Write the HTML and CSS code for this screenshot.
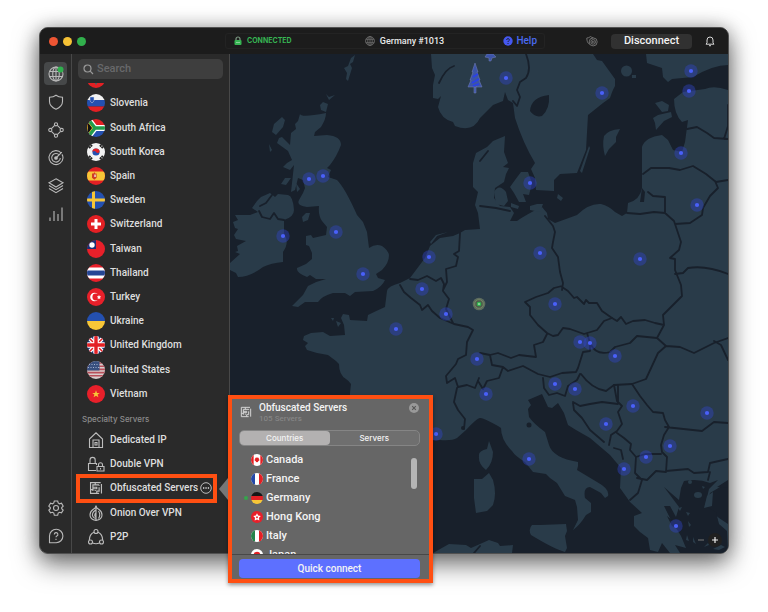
FILE: index.html
```html
<!DOCTYPE html>
<html lang="en">
<head>
<meta charset="utf-8">
<title>VPN</title>
<link rel="stylesheet" href="styles.css">
</head>
<body>
<main class="window">
  <header class="titlebar">
    <div class="lights"><i class="light red"></i><i class="light yellow"></i><i class="light green"></i></div>
    <div class="status">
      <span class="connected"><svg width="8" height="10" viewBox="0 0 8 10"><path d="M2 4.500V3a2 2 0 0 1 4 0v1.500" fill="none" stroke="#7d9a83" stroke-width="1.200"/><rect x=".5" y="4" width="7" height="5" rx="1" fill="#37b453"/><path d="M2.500 6.500h3" stroke="#d6f0dc" stroke-dasharray="1 1"/></svg>CONNECTED</span>
      <span class="server"><svg width="10" height="10" viewBox="0 0 18 18" fill="none" stroke="#6c6c6c" stroke-width="1.500"><circle cx="9" cy="9" r="8"/><ellipse cx="9" cy="9" rx="4" ry="8"/><path d="M1.500 6h15M1.500 12h15M9 1v16"/></svg>Germany #1013</span>
      <a class="help" href="#help"><svg width="10" height="10" viewBox="0 0 10 10"><circle cx="5" cy="5" r="4.700" fill="#4558f0"/><path d="M3.700 3.900a1.300 1.300 0 1 1 1.800 1.200Q5 5.400 5 6M5 7v1" fill="none" stroke="#1c2030"/></svg>Help</a>
    </div>
    <div class="actions">
      <button class="icon-btn" aria-label="Pause protection"><svg width="12" height="12" viewBox="0 0 12 12" fill="none" stroke="#777" stroke-width=".9"><path d="M3.500 9.300C1.600 8 .8 6 .8 3Q3 3 4.500 1.500 5.800 2.600 7.200 2.800"/><circle cx="7.200" cy="6.900" r="4"/><circle cx="7.200" cy="6.900" r="2.300"/><path d="M6.600 5.900v2M7.900 5.900v2"/></svg></button>
      <button class="disconnect">Disconnect</button>
      <button class="icon-btn" aria-label="Notifications"><svg width="10" height="11" viewBox="0 0 10 11" fill="none" stroke="#d8d8d8"><path d="M1 8.200h8L8 6.800V4a3 3 0 0 0-6 0v2.800zM4 9.700h2"/></svg></button>
    </div>
  </header>

  <div class="body">
    <nav class="rail" aria-label="Sections">
      <button class="active" aria-label="Countries"><svg viewBox="0 0 18 18"><circle cx="9" cy="9" r="7"/><ellipse cx="9" cy="9" rx="3.300" ry="7"/><path d="M2.700 6.500h12.600M2.700 11.500h12.600M9 2v14"/><circle cx="13.500" cy="4.500" r="3" fill="#2fb04d" stroke="none"/></svg></button>
      <button aria-label="Threat protection"><svg viewBox="0 0 18 18"><path d="M9 2.200Q11.500 4.200 15.500 4.200V8.500Q15.500 13.500 9 16.200 2.500 13.500 2.500 8.500V4.200Q6.500 4.200 9 2.200z"/></svg></button>
      <button aria-label="Meshnet"><svg viewBox="0 0 18 18"><circle cx="9" cy="3.300" r="1.600"/><circle cx="3.300" cy="9" r="1.600"/><circle cx="14.700" cy="9" r="1.600"/><circle cx="9" cy="14.700" r="1.600"/><path d="M7.700 4.300 4.400 7.700M10.300 4.300l3.300 3.400M4.400 10.300l3.300 3.300M13.600 10.300l-3.300 3.300"/></svg></button>
      <button aria-label="Dark web monitor"><svg viewBox="0 0 18 18"><path d="M14.300 4A7 7 0 1 0 16 9q0-2-1-3.600M12.300 6A4.300 4.300 0 1 0 13.300 9M9 9l5.800-5.800"/><circle cx="9" cy="9" r="1.300" fill="#c4c4c4"/></svg></button>
      <button aria-label="Split tunneling"><svg viewBox="0 0 18 18"><path d="M9 1.800l7 4-7 4.200-7-4.200zM2 8.500l7 4.200 7-4.200M2 11.500l7 4.200 7-4.200"/></svg></button>
      <button aria-label="Statistics"><svg viewBox="0 0 18 18"><path d="M3 12.500V16M7 6v10M11 9v7M15 2.500V16"/></svg></button>
      <span class="push"></span>
      <button aria-label="Settings"><svg viewBox="0 0 18 18"><circle cx="9" cy="9" r="2.500"/><path d="M7.300 2h3.400l.5 2 1.300.8 2-.6 1.700 2.900-1.500 1.400v1.200l1.500 1.300-1.700 2.900-2-.6-1.300.8-.5 2.100H7.300l-.5-2.100-1.300-.8-2 .6L1.800 11l1.500-1.300V8.500L1.800 7.100l1.700-2.900 2 .6L6.800 4z"/></svg></button>
      <button aria-label="Support"><svg viewBox="0 0 18 18"><path d="M2.500 15.700V9A6.700 6.700 0 1 1 9.200 15.700z"/><path d="M7.300 7.500a1.800 1.800 0 1 1 2.500 1.600Q9 9.500 9 10.300M9 11.700v1.200"/></svg></button>
    </nav>

    <aside class="sidebar">
      <label class="search"><svg width="11" height="11" viewBox="0 0 11 11" fill="none" stroke="#9a9a9a" stroke-width="1.200"><circle cx="4.500" cy="4.500" r="3.500"/><path d="M7.200 7.200 10 10"/></svg><input type="search" placeholder="Search" aria-label="Search"></label>
      <div class="scroll">
        <div class="countries">
          <button class="row" aria-label="Slovakia"><svg class="flag" viewBox="0 0 18 18"><path fill="#eee" d="M0 0h18v9H0z"/><path fill="#e32024" d="M0 9h18v9H0z"/><path fill="#466" d="M6 10h6l-3 5z"/></svg></button>
          <button class="row"><svg class="flag" viewBox="0 0 18 18"><path fill="#f3f3f3" d="M0 0h18v6H0z"/><path fill="#2450b0" d="M0 6h18v6.500H0z"/><path fill="#e32024" d="M0 12.500h18V18H0z"/><path fill="#2450b0" stroke="#cfd6e6" stroke-width=".5" d="M3 3h4v3.500q-.5 1.500-2 2.500-1.500-1-2-2.500z"/></svg>Slovenia</button>
          <button class="row"><svg class="flag" viewBox="0 0 18 18"><path fill="#e32024" d="M0 0h18v9H0z"/><path fill="#2450b0" d="M0 9h18v9H0z"/><path d="M1 0 8 9 1 18M8 9h10" fill="none" stroke="#fff" stroke-width="6"/><path d="M0 1v16l6-8z" fill="#111" stroke="#f5c12e" stroke-width="1.500"/><path d="M1 0 8 9 1 18M8 9h10" fill="none" stroke="#239b4b" stroke-width="3.400"/></svg>South Africa</button>
          <button class="row"><svg class="flag" viewBox="0 0 18 18"><path fill="#f3f3f3" d="M0 0h18v18H0z"/><circle cx="9" cy="9" r="3.600" fill="#2450b0"/><path d="M5.400 9a3.600 3.600 0 0 1 7.200 0q-2 2-3.600 0T5.400 9z" fill="#e32024"/><path d="m2 5 3-3M13 2l3 3M2 13l3 3M13 16l3-3" stroke="#222" stroke-width="2.200" stroke-dasharray="2 .4"/></svg>South Korea</button>
          <button class="row"><svg class="flag" viewBox="0 0 18 18"><path fill="#e32024" d="M0 0h18v18H0z"/><path fill="#f7c637" d="M0 4.500h18v9H0z"/><path fill="#cf3b26" d="M5 6.500h1.500L7.300 5l.8 1.500h1.500v4.300l-2.300 2-2.300-2z"/><path fill="#f3d9d0" d="M7.300 7.500h1.500v2.500H7.300z"/></svg>Spain</button>
          <button class="row"><svg class="flag" viewBox="0 0 18 18"><path fill="#2450b0" d="M0 0h18v18H0z"/><path fill="#f7c637" d="M5 0h3v18H5zM0 7.500h18v3H0z"/></svg>Sweden</button>
          <button class="row"><svg class="flag" viewBox="0 0 18 18"><path fill="#e32024" d="M0 0h18v18H0z"/><path fill="#fff" d="M7.500 4h3v3.500H14v3h-3.500V14h-3v-3.500H4v-3h3.500z"/></svg>Switzerland</button>
          <button class="row"><svg class="flag" viewBox="0 0 18 18"><path fill="#e8202a" d="M0 0h18v18H0z"/><path fill="#1b2e74" d="M0 0h9v9H0z"/><circle cx="5" cy="5" r="2.700" fill="#fff"/></svg>Taiwan</button>
          <button class="row"><svg class="flag" viewBox="0 0 18 18"><path fill="#e8202a" d="M0 0h18v18H0z"/><path fill="#fff" d="M0 3.500h18v11H0z"/><path fill="#254595" d="M0 6.500h18v5H0z"/></svg>Thailand</button>
          <button class="row"><svg class="flag" viewBox="0 0 18 18"><path fill="#e8202a" d="M0 0h18v18H0z"/><circle cx="7.500" cy="9" r="4.300" fill="#fff"/><circle cx="8.800" cy="9" r="3.400" fill="#e8202a"/><path fill="#fff" d="m12 7 .7 1.300 1.500.3-1.100 1 .2 1.500-1.300-.7-1.300.7.2-1.500-1.100-1 1.500-.3z"/></svg>Turkey</button>
          <button class="row"><svg class="flag" viewBox="0 0 18 18"><path fill="#2450b0" d="M0 0h18v9H0z"/><path fill="#f7c637" d="M0 9h18v9H0z"/></svg>Ukraine</button>
          <button class="row"><svg class="flag" viewBox="0 0 18 18"><path fill="#24387e" d="M0 0h18v18H0z"/><path d="m0 0 18 18M18 0 0 18" stroke="#fff" stroke-width="4"/><path d="m0 0 18 18M18 0 0 18" stroke="#e32024" stroke-width="1.500"/><path d="M9 0v18M0 9h18" stroke="#fff" stroke-width="5.500"/><path d="M9 0v18M0 9h18" stroke="#e32024" stroke-width="3.400"/></svg>United Kingdom</button>
          <button class="row"><svg class="flag" viewBox="0 0 18 18"><path fill="#d9cccc" d="M0 0h18v18H0z"/><path d="M0 2h18M0 5.200h18M0 8.400h18M0 11.600h18M0 14.800h18" stroke="#b8505a" stroke-width="1.600"/><path fill="#38507f" d="M0 0h12.500v9.500H0z"/><path d="M2 3.500h10M1 6.500h11" stroke="#a6b3cf" stroke-dasharray="1 1.500"/></svg>United States</button>
          <button class="row"><svg class="flag" viewBox="0 0 18 18"><path fill="#e8202a" d="M0 0h18v18H0z"/><path fill="#f7c637" d="m9 5.300 1 2.600h2.800l-2.200 1.700.8 2.700L9 10.700l-2.400 1.600.8-2.700-2.200-1.700H8z"/></svg>Vietnam</button>
        </div>
        <h2>Specialty Servers</h2>
        <div class="specialty">
          <button class="row"><svg class="glyph" viewBox="0 0 18 18"><path d="M6 16.500H2.500V8L9 1.800 15.500 8v8.500H12M6 16.500V9h6v7.500zM8 14V11.500h2V14z"/></svg>Dedicated IP</button>
          <button class="row"><svg class="glyph" viewBox="0 0 18 18"><path d="M9 15.500H1.500v-7h8V10M3 8.500V5a2.600 2.600 0 0 1 5.200 0v3.500M10 11.500h7V16h-7zM11.500 11.500V9.800a2 2 0 0 1 4 0v1.700M13.500 13v1.500"/></svg>Double VPN</button>
          <button class="row picked"><svg class="glyph" viewBox="0 0 18 18"><use href="#maze"/></svg>Obfuscated Servers<svg class="more" viewBox="0 0 12 12"><circle cx="6" cy="6" r="5.300" fill="none" stroke="#ccc" stroke-width=".9"/><path d="M3 6h1.300M5.400 6h1.300M7.800 6h1.300" stroke="#ddd" stroke-width="1.300"/></svg></button>
          <button class="row"><svg class="glyph" viewBox="0 0 18 18"><path d="M9 1.500Q9 4 12 5.500q3 2 3 5.500 0 4.500-6 5.500Q3 15.500 3 11q0-3.500 3-5.500 3-1.500 3-4zM9 4v12M9 6Q5 8 5.500 11.500 6 14 9 14.500M9 8.500q-2.500 3 0 4.500M11.500 7q2.500 4 0 7.500"/></svg>Onion Over VPN</button>
          <button class="row"><svg class="glyph" viewBox="0 0 18 18"><circle cx="9" cy="3.500" r="2"/><circle cx="3.500" cy="14" r="2"/><circle cx="14.500" cy="14" r="2"/><path d="M7 4.200Q2.500 6 2.300 12M11 4.200q4.500 1.800 4.700 7.800M5.500 15q3.500 1.500 7 0"/></svg>P2P</button>
        </div>
      </div>

      <section class="popover" aria-label="Obfuscated Servers">
        <div class="pop-head">
          <svg class="pop-icon" viewBox="0 0 18 18"><use href="#maze"/></svg>
          <div class="pop-title"><strong>Obfuscated Servers</strong><small>105 Servers</small></div>
          <button class="close" aria-label="Close"><svg viewBox="0 0 10 10"><circle cx="5" cy="5" r="5" fill="#999"/><path d="m3.200 3.200 3.600 3.600M6.800 3.200 3.200 6.800" stroke="#555" stroke-width="1.100"/></svg></button>
        </div>
        <div class="tabs"><button class="on">Countries</button><button>Servers</button></div>
        <div class="pop-list">
          <div class="pop-rows">
            <button><svg class="mini" viewBox="0 0 18 18"><path fill="#fff" d="M0 0h18v18H0z"/><path fill="#e32024" d="M0 0h4v18H0zM14 0h4v18h-4zM9 4l1 2 2-.5-.5 2L13 9l-2.500 2.200.2 1.300-1.700-.5-1.700.5.2-1.300L5 9l1.500-1.500-.5-2 2 .5z"/></svg>Canada</button>
            <button><svg class="mini" viewBox="0 0 18 18"><path fill="#fff" d="M0 0h18v18H0z"/><path fill="#2448a8" d="M0 0h6v18H0z"/><path fill="#e32024" d="M12 0h6v18h-6z"/></svg>France</button>
            <button class="current"><svg class="mini" viewBox="0 0 18 18"><path fill="#161616" d="M0 0h18v6H0z"/><path fill="#e32024" d="M0 6h18v6H0z"/><path fill="#f7c637" d="M0 12h18v6H0z"/></svg>Germany</button>
            <button><svg class="mini" viewBox="0 0 18 18"><path fill="#e8202a" d="M0 0h18v18H0z"/><path fill="#fff" d="m9 3.500 1.800 3.300 3.900.7L12 10.300l.5 4L9 12.600l-3.500 1.700.5-4-2.700-2.800 3.900-.7z"/><circle cx="9" cy="9.300" r="1.400" fill="#e8202a"/></svg>Hong Kong</button>
            <button><svg class="mini" viewBox="0 0 18 18"><path fill="#fff" d="M0 0h18v18H0z"/><path fill="#25834a" d="M0 0h6v18H0z"/><path fill="#e32024" d="M12 0h6v18h-6z"/></svg>Italy</button>
            <button><svg class="mini" viewBox="0 0 18 18"><path fill="#fff" d="M0 0h18v18H0z"/><circle cx="9" cy="9" r="5" fill="#e32024"/></svg>Japan</button>
          </div>
          <i class="thumb"></i>
        </div>
        <div class="pop-foot"><button class="quick">Quick connect</button></div>
      </section>
    </aside>

    <section class="map" aria-label="Server map">
      <svg class="world" viewBox="230 54 498 499" preserveAspectRatio="xMidYMid slice">
        <defs>
          <g id="maze" fill="none" stroke-width="1.500"><path d="M15 2H2v14h11M16 4v12M5 13V5h8M5 8h5v2H5M8 13v-1.500M10 16v-3h3V8M13 5v1M2 11h3M8 2v3"/></g>
          <g id="pin"><circle r="6.700" fill="#3346c8" fill-opacity=".42"/><circle r="2.100" fill="#4a60fa"/></g>
        </defs>
        <g class="land">
          <path d="M300 114Q301 118 326 113 326 119 321 127L315 132 314 136 327 135Q341 136 341 145 337 156 330 165L327 168 331 170 328 177 337 180Q345 188 357 215L363 222 367 232 369 248Q376 243 382 246 388 250 389 255 389 263 382 270L376 274 378 278 385 280Q382 287 373 291L355 292 350 296 345 293 333 293Q322 296 318 302L305 302 298 307 292 306 303 295 308 286Q317 281 326 279L316 279 310 275 307 277Q296 273 297 268L306 264 312 259 312 253 309 246 306 245 306 236 311 235 313 238 326 235 327 227 322 221Q318 215 319 206L307 207Q296 206 299 200L303 193 305 188 303 180 298 178 295 190 291 192 294 165 290 170 283 167 287 163 292 160 288 151 277 143 279 138 282 137 290 145 291 133 296 129 295 124 298 121z"/>
          <path d="M270 193 261 197 257 201 252 208 258 212 250 215 235 215 238 220 233 222 235 228 238 229 234 235 236 239 246 241 237 246 238 251 235 252 240 254 230 263 230 270 236 273 238 277Q250 277 263 267 271 263 283 262L283 252Q290 242 284 234L284 220Q294 217 294 210 293 196 288 195L278 194 275 197z"/>
          <path d="M282 117 285 120 283 127 276 135 272 132 274 124zM272 138h-5M269 144l3 6-2 2zM291 178l-5 7-5-1 4-6zM296 183l4 6-3 3zM306 213l4 0-2 7-5 2-1-5zM355 55l-2 7-3 2 2 4-4 13-2-2 1-6-3-5 4-2 3-8zM323 102l5 2-2 8-5-2-1-5zM326 94l3 3 6-2-6 5zM331 318l3 0-1 3zM336 321l5 2-3 4zM430 242 436 235 448 232 437 236 431 244z"/>
          <path d="M350 440V393L351 384Q349 381 346 379 339 375 339 364L336 361 328 355 317 353 307 350 305 346 308 343 303 340 304 336 311 333 323 332 330 336 345 335 344 325 341 318 343 314 349 315 350 320 367 321 368 315Q376 311 385 307L387 291Q388 286 400 283L410 278 425 258 430 246 440 238 453 236 460 233 465 230 480 229 478 213 475 205 478 192 473 187V163L476 153 487 147 493 141 505 136 504 152 508 163 503 167 509 168 506 174 504 182 495 188 494 198 500 206 510 207 514 213 510 221 517 221Q527 214 542 207L547 213 548 219 555 223 577 215Q589 203 601 204 609 206 615 212L622 216 627 213 628 203Q640 200 642 188V147Q645 137 662 135L668 140 673 150 682 152 685 142 688 120 682 122Q674 114 674 99L683 92 705 89Q714 85 728 90V481L720 487 710 493 706 507 719 518 728 524V553H670L662 543 658 552 650 550 648 538 640 532 634 526V516L642 513 630 502 620 488 621 468 610 455 590 438 576 430 568 425 564 413 558 403 552 408 548 407 542 394 528 400 531 405 528 409 529 417Q534 424 545 432L549 445Q553 458 578 462L578 466 577 470 597 482Q610 489 608 496L605 498 601 493 590 487Q583 487 585 498L591 503V512L586 515Q580 525 573 530L578 520 577 507 575 500 565 496 557 483 550 478 546 474 533 472 525 462Q515 456 512 451 501 440 501 428L498 426Q482 417 480 418 477 418 466 430L457 438Q452 441 440 440z"/>
          <path d="M431 54 432 68 435 75 433 85 433 98 438 99 441 96 438 107Q441 119 453 122L455 126Q473 133 480 118L493 105 503 101 505 92 508 100 513 103 515 118Q523 143 535 163L531 169 535 178 536 190 554 191 554 180 560 174 577 173 586 150 588 115 603 103 610 98Q613 89 615 86V79L602 61 597 60 593 54z"/>
          <path d="M646 54 647 63 662 68 663 77 668 82 672 79 693 77Q713 65 728 65V54z"/>
          <circle cx="626.500" cy="71" r="5.500"/><path d="M632 75h4v3h-4zM655 103l7-2 7 4-1 6-6 1zM653 118l5-3 13-3 1 5-8 4-8 9-1-7zM604 136q4-6 16-7l-4 8 0 5-7 7-4 7q-3-11-1-20zM589 146l1 2-8 25-2-2zM558 194l5 4-2 3-4-3z"/>
          <path d="M510 187 515 180 521 172 528 172 532 183 529 195 523 194 526 202 519 202 514 193zM494 192q5-9 12 0l2 9-4 5-8-2zM511 203l8 3-1 3-7-2zM530 206l7-2 6 0-3 8-10-2z"/>
          <path d="M489 441 493 452Q493 463 486 470 478 464 479 456 478 451 487 449zM474 479l8 0 7-6 4 7q4 14 0 25l-6 6-11 2-2-15zM532 525l8 0 26-1 1 7-2 5 2 12-2 4q-11-3-34-17-3-6 1-10zM433 553l16-9 17 1 5 3 18-8 9 3 2 3 13-1-1 8z"/>
        </g>
        <g class="sea">
          <path d="M549 95Q531 97 530 111 535 118 542 116 550 109 549 95zM640 202l2-14 3 4-1 10z"/>
          <path d="M664 487 679 500 681 488 684 481Q698 478 710 483L718 480 709 489 705 506 716 512 719 524 727 531 728 553H680L675 545 686 548 681 536 671 520 664 506 670 506 676 517 679 507z"/>
          <circle cx="529" cy="425" r="2.500"/><circle cx="463" cy="428" r="2"/>
          <path d="M717 487l11-7v8zM667 516l10 8 4 7-9-5z"/>
        </g>
        <g class="land"><circle cx="690" cy="482" r="2"/><ellipse cx="698" cy="495" rx="4" ry="3"/><path d="M702 486l3 1-2 2zM678 508l4-1-2 4zM686 512l4 1-2 3zM707 496l6-4-1 14-8 2zM688 521l3 4-2 2zM687 535l2 6-3-1zM693 537l3 7-3-2zM704 547l4-4 1 2zM713 549l8-4 4 2-6 3z"/></g>
        <g class="borders">
          <path d="M526 54Q532 69 526 78L520 82 517 90 520 97 517 106 513 101M454 66q-8 2-15 17M480 161l8-10"/>
          <path d="M259 211 262 217 270 219 274 213 278 219 284 220M272 195l-6 8-6 3"/>
          <path d="M400 285 404 292 411 298 420 305 422 310 428 305 432 311 440 318 454 324 468 327 473 330 467 342 466 355M410 279 418 280 427 276 436 281 441 278 444 284 443 291 449 299 446 309 453 323M460 233 459 251 454 254 458 257 456 266 446 269 447 282 443 290M466 355 458 359 456 364 446 376 447 383 455 378 458 387 467 385 475 388 479 378M457 388 454 402 458 410 465 419 464 429"/>
          <path d="M480 206 496 208 510 211M545 216 553 226 555 232 553 242 552 248 558 257 560 272 563 283 562 290M562 286 554 288 548 293 536 297 525 302 530 307 530 315 538 325 547 333 553 336 558 335 563 328 570 329 584 334 597 330 604 321 612 318 602 311 597 303 589 303 586 300 584 304 577 297 574 298 568 291 562 287M547 334 543 342 534 345 536 357 519 355 511 358 498 353 490 355 480 353M490 355 492 365 503 367 508 371 523 366 538 374 550 377 562 373 576 372 578 368 583 352 590 351 590 343 587 333M503 367 499 378 487 381 483 389 478 381"/>
          <path d="M612 318 617 321 621 317 626 324 633 321 645 320 655 323 664 325 657 338 637 336 630 343 615 347 610 352Q596 356 590 343M657 338 666 346 658 353 646 379 632 384 614 385 606 391Q592 389 581 374M664 325 663 315 682 296 681 285 675 270V259L670 258 679 250 681 242 674 221 665 213 654 212 640 214 627 213M665 213 665 197 653 196 648 192M643 174 651 168 669 168 680 170 693 166 706 174 716 182 728 180M675 224 690 223 702 215 703 208 710 196 718 188 715 181M687 129 697 127 707 133 714 138 728 139M728 105V126l-4 13M675 274 683 273 688 268Q706 265 728 274M666 346 680 347 694 353 714 343 728 338M714 341 721 345 728 360"/>
          <path d="M543 378 544 388 549 395 557 393 565 396 568 386 577 380 580 374M573 402 580 406 590 404 602 402 618 404 618 385M573 403 574 410 582 418 590 430 604 442M614 385 617 401 622 406 618 412 622 424 617 431 611 435 609 445M632 384 640 396 647 405 653 412 663 413 665 420 669 427 664 435 661 445 662 452 667 457 666 472 656 471 647 480 637 478M665 427 702 431 714 422 728 423M666 471 688 469 694 473 708 472 710 463 728 459M710 472l-2 8M617 433 624 438 631 444 630 450 636 457 645 454 661 454M623 459 621 450 614 448M636 457 635 473 642 480 638 493 630 500M480 546l-6 7"/>
        </g>
        <g class="tree"><path d="m475 63-3 9 1 0-3 8 1 0-3 7h14l-3-7 1 0-3-8 1 0zM474 86h2v7h-2zM485 57l2-3h6l3 3-4 1-1 3h-2v-3z" fill="#3c54a8" stroke="#7680b7" stroke-width=".5"/><path d="m473 77 5-3M472 83l7-4M473 86l6-2" stroke="#2940ec" stroke-width="1.500"/></g>
        <g>
          <use href="#pin" x="506" y="78"/><use href="#pin" x="602" y="93"/><use href="#pin" x="691" y="71"/><use href="#pin" x="689" y="91"/><use href="#pin" x="681" y="153"/><use href="#pin" x="530" y="183"/><use href="#pin" x="697" y="205"/><use href="#pin" x="309" y="179"/><use href="#pin" x="323" y="176"/><use href="#pin" x="283" y="236"/><use href="#pin" x="336" y="232"/><use href="#pin" x="363" y="274"/><use href="#pin" x="429" y="257"/><use href="#pin" x="422" y="289"/><use href="#pin" x="446" y="314"/><use href="#pin" x="396" y="329"/><use href="#pin" x="477" y="359"/><use href="#pin" x="540" y="253"/><use href="#pin" x="640" y="259"/><use href="#pin" x="555" y="304"/><use href="#pin" x="580" y="342"/><use href="#pin" x="590" y="343"/><use href="#pin" x="615" y="356"/><use href="#pin" x="555" y="384"/><use href="#pin" x="575" y="389"/><use href="#pin" x="486" y="394"/><use href="#pin" x="436" y="434"/><use href="#pin" x="529" y="459"/><use href="#pin" x="606" y="424"/><use href="#pin" x="633" y="406"/><use href="#pin" x="707" y="413"/><use href="#pin" x="670" y="446"/><use href="#pin" x="646" y="457"/><use href="#pin" x="624" y="469"/><use href="#pin" x="676" y="526"/>
          <circle cx="479" cy="304" r="6.300" fill="#5e6d5f"/><circle cx="479" cy="304" r="4.300" fill="#4c5c4c" stroke="#7b8d64" stroke-width=".8"/><circle cx="479" cy="304" r="2.300" fill="#31b54e"/><circle cx="479" cy="304" r=".8" fill="#eee"/>
        </g>
      </svg>
      <div class="zoom"><button aria-label="Zoom out"><svg viewBox="0 0 14 14"><path d="M4 7h6" stroke="#777"/></svg></button><button class="plus" aria-label="Zoom in"><svg viewBox="0 0 14 14"><path d="M4 7h6M7 4v6" stroke="#eee" stroke-width="1.200"/></svg></button></div>
    </section>
  </div>
</main>
</body>
</html>
```
FILE: styles.css
```css
* { box-sizing: border-box; }
body {
  margin: 0;
  min-height: 100vh;
  padding: 27px 39px 58px;
  display: flex;
  background: #fff;
  color: #dedede;
  font: 500 10px/14px Roboto, "Liberation Sans", sans-serif;
  overflow: hidden;
}
button, input {
  font: inherit;
  color: inherit;
  background: none;
  border: 0;
  padding: 0;
  margin: 0;
}
svg { display: block; flex: none; }
h2 { margin: 0; font-weight: 500; }

.window {
  flex: 1;
  min-width: 0;
  height: calc(100vh - 85px);
  display: flex;
  flex-direction: column;
  border: 1px solid #505050;
  border-radius: 9px;
  background: #2a2a2a;
  box-shadow: 0 10px 26px rgba(0, 0, 0, .55), 0 0 18px rgba(0, 0, 0, .25);
}

.titlebar {
  height: 26px;
  flex: none;
  display: flex;
  align-items: center;
  background: #1c1c1c;
  border-radius: 8px 8px 0 0;
}
.lights { display: flex; gap: 5px; padding-left: 9px; width: 185px; flex: none; }
.light { width: 9px; height: 9px; border-radius: 50%; }
.red { background: #ee5533; }
.yellow { background: #f6c235; }
.green { background: #31b04c; }
.status {
  flex: 1;
  max-width: 320px;
  height: 16px;
  display: flex;
  align-items: center;
  justify-content: space-between;
  padding: 0 7px 0 8px;
  border: 1px solid #232323;
  border-radius: 3px;
}
.status span, .help { display: flex; align-items: center; gap: 5px; }
.connected { color: #37b453; font-size: 7px; font-weight: 700; font-family: Inter, sans-serif; }
.server { color: #e8e8e8; font-size: 9px; padding-left: 14px; }
.help { color: #4a6af0; text-decoration: none; gap: 3px; }
.actions { display: flex; align-items: center; gap: 13px; margin-left: auto; padding-right: 13px; }
.disconnect {
  width: 81px;
  height: 15px;
  border-radius: 4px;
  background: #313131;
  color: #f4f4f4;
  font-size: 11px;
}

.body { flex: 1; min-height: 0; display: flex; }
.rail {
  width: 32px;
  flex: none;
  display: flex;
  flex-direction: column;
  align-items: center;
  gap: 5px;
  padding: 8px 0 6px;
  border-right: 1px solid #484848;
}
.rail button {
  width: 23px;
  height: 23px;
  display: grid;
  place-items: center;
  border-radius: 4px;
}
.rail .active { background: #464849; }
.rail svg { width: 18px; height: 18px; fill: none; stroke: #b9b9b9; stroke-width: 1.1; }
.push { flex: 1; }

.sidebar {
  position: relative;
  width: 158px;
  flex: none;
  display: flex;
  flex-direction: column;
  border-right: 1px solid #484848;
}
.search {
  height: 20px;
  flex: none;
  margin: 5px 6px 4px;
  padding: 0 5px;
  display: flex;
  align-items: center;
  gap: 3px;
  border-radius: 5px;
  background: #3e3e3e;
}
.search input { flex: 1; min-width: 0; outline: 0; font-size: 11px; }
.search input::placeholder { color: #68696b; opacity: 1; }
.scroll {
  flex: 1;
  min-height: 0;
  display: flex;
  flex-direction: column;
  overflow: hidden;
  padding-bottom: 4px;
}
.countries, .specialty { display: grid; grid-auto-rows: 1fr; min-height: 0; }
.countries { flex: 14; margin-top: -16px; }
.specialty { flex: 5; }
.scroll h2 { height: 22px; flex: none; padding: 6px 0 0 10px; color: #8c8c8c; font-size: 8px; font-family: Inter, sans-serif; }
.row {
  display: flex;
  align-items: center;
  gap: 5px;
  padding-left: 15px;
  text-align: left;
  white-space: nowrap;
  min-height: 0;
}
.flag { width: 18px; height: 18px; border-radius: 50%; }
.glyph { width: 18px; height: 18px; fill: none; stroke: #bdbdbd; stroke-width: 1.1; }
.picked { outline: 4px solid #ff4f12; outline-offset: -2px; margin: 0 14px 0 6px; padding-left: 9px; }
.picked .glyph, .pop-icon { padding: 2px; }
.picked .more { width: 12px; height: 12px; margin-left: -3px; }

.popover {
  position: absolute;
  left: 156px;
  bottom: -30px;
  width: 205px;
  border: 4px solid #ff4f12;
  background: #666;
  color: #f4f4f4;
  z-index: 2;
  box-shadow: 0 2px 4px rgba(0, 0, 0, .4);
}
.popover::before {
  content: "";
  position: absolute;
  left: -13px;
  top: 79px;
  border: 11px solid transparent;
  border-left: 0;
  border-right: 9px solid #777;
}
.pop-head { display: flex; align-items: flex-start; gap: 5px; height: 31px; padding: 3px 10px 0 6px; }
.pop-icon { width: 16px; height: 16px; margin-top: 2px; fill: none; stroke: #d4d4d4; }
.pop-title { flex: 1; display: flex; flex-direction: column; }
.pop-title strong { line-height: 12px; font-weight: 500; }
.pop-title small { font-size: 8px; line-height: 9px; color: #858585; }
.close { width: 10px; height: 10px; margin-top: 1px; }
.tabs {
  display: flex;
  height: 16px;
  margin: 0 9px 4px 7px;
  border: 1px solid #858585;
  border-radius: 5px;
  background: #6f6f6f;
  font-size: 8px;
  font-family: Inter, sans-serif;
}
.tabs button { flex: 1; line-height: 14px; }
.tabs .on { background: #b3b1b1; border-radius: 4px; }
.pop-list { height: 105px; display: flex; overflow: hidden; border-bottom: 1px solid #484848; }
.pop-rows { flex: 1; }
.pop-rows button {
  width: 100%;
  height: 19px;
  display: flex;
  align-items: center;
  gap: 3px;
  padding-left: 19px;
  font-size: 11px;
}
.mini { width: 12px; height: 12px; border-radius: 50%; }
.pop-rows .current { padding-left: 12px; }
.current::before { content: ""; width: 4px; height: 4px; border-radius: 50%; background: #36a64c; }
.thumb { width: 6px; height: 31px; margin: 8px 12px 0 0; border-radius: 3px; background: #b5b5b5; }
.pop-foot { padding: 4px 9px 1px 7px; }
.quick {
  display: block;
  width: 100%;
  height: 19px;
  border-radius: 4px;
  background: #5d70ff;
}

.map {
  position: relative;
  flex: 1;
  min-width: 0;
  overflow: hidden;
  border-radius: 0 0 8px 0;
  background: #18202b;
}
.world { width: 100%; height: 100%; }
.land { fill: #293b49; }
.sea { fill: #18202b; }
.borders { fill: none; stroke: #18202b; stroke-width: 1.8; stroke-linejoin: round; stroke-linecap: round; }
.zoom { position: absolute; right: 6px; bottom: 6px; display: flex; }
.zoom button { width: 14px; height: 14px; border-radius: 50%; }
.zoom .plus { background: #202020; }
```
